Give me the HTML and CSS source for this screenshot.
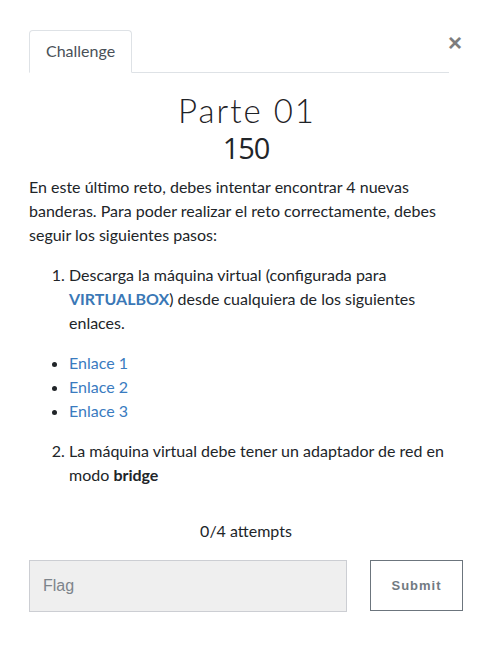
FILE: index.html
```html
<!DOCTYPE html>
<html lang="es">
<head>
<meta charset="utf-8">
<link rel="stylesheet" href="styles.css">
</head>
<body>
<div class="modal">
  <div class="tabs-row">
    <ul class="tabs">
      <li class="tab">Challenge</li>
    </ul>
    <button class="close" aria-label="Close">&times;</button>
  </div>
  <div class="content">
    <h2 class="title">Parte 01</h2>
    <div class="points">150</div>
    <p class="desc">En este último reto, debes intentar encontrar 4 nuevas banderas. Para poder realizar el reto correctamente, debes seguir los siguientes pasos:</p>
    <ol class="steps">
      <li><p>Descarga la máquina virtual (configurada para <a class="strong-link" href="#">VIRTUALBOX</a>) desde cualquiera de los siguientes enlaces.</p></li>
    </ol>
    <ul class="links">
      <li><a href="#">Enlace 1</a></li>
      <li><a href="#">Enlace 2</a></li>
      <li><a href="#">Enlace 3</a></li>
    </ul>
    <ol class="steps" start="2">
      <li><p>La máquina virtual debe tener un adaptador de red en modo <strong>bridge</strong></p></li>
    </ol>
    <p class="attempts">0/4 attempts</p>
    <div class="submit-row">
      <input class="flag" type="text" placeholder="Flag">
      <button class="submit">Submit</button>
    </div>
  </div>
</div>
</body>
</html>
```
FILE: styles.css
```css
* { box-sizing: border-box; }
html, body { margin: 0; padding: 0; background: #fff; }
body {
  font-family: Lato, "Open Sans", sans-serif;
  font-size: 16px;
  line-height: 24px;
  color: #212529;
}
.modal {
  padding: 30px 27px 0 29px;
  width: 490px;
}
.tabs-row {
  display: flex;
  align-items: flex-start;
}
.tabs {
  list-style: none;
  margin: 0;
  padding: 0;
  width: 420px;
  flex-shrink: 0;
  display: flex;
  border-bottom: 1px solid #dee2e6;
}
.tab {
  margin-bottom: -1px;
  padding: 8px 16px 9px 16px;
  border: 1px solid #dee2e6;
  border-bottom-color: #fff;
  border-radius: 4px 4px 0 0;
  color: #495057;
  font-size: 16px;
  line-height: 24px;
  background: #fff;
}
.close {
  margin: 1px 0 0 -1px;
  padding: 0;
  border: 0;
  background: none;
  font-family: "Liberation Sans", Arial, sans-serif;
  font-size: 24px;
  line-height: 24px;
  font-weight: 700;
  color: #7d7d7d;
}
.content {
  width: 434px;
}
.title {
  margin: 17px 0 0 0;
  text-align: center;
  font-family: Lato, "Open Sans", sans-serif;
  font-weight: 300;
  font-size: 33px;
  line-height: 40px;
  letter-spacing: 2px;
  text-indent: 2px;
  color: #1f2327;
}
.points {
  margin: 0 0 8px 0;
  text-align: center;
  font-family: "Open Sans", Lato, sans-serif;
  font-weight: 400;
  font-size: 29px;
  line-height: 36px;
  letter-spacing: -1px;
  color: #212529;
}
.desc { margin: 0 0 16px 0; padding-top: 1px; }
.steps {
  margin: 0;
  padding-left: 40px;
}
.steps p { margin: 0 0 16px 0; }
.links {
  margin: 0 0 16px 0;
  padding-left: 40px;
}
a {
  color: #3a7bbf;
  text-decoration: none;
}
.strong-link { font-weight: 700; color: #3a78b6; }
.attempts {
  margin: 32px 0 17px 0;
  text-align: center;
}
.submit-row {
  display: flex;
  width: 434px;
  gap: 23px;
}
.flag {
  width: 318px;
  height: 52px;
  background: #efefef;
  border: 1px solid #ccced3;
  padding: 0 13px;
  font-family: "Liberation Sans", Arial, sans-serif;
  font-size: 16px;
  color: #495057;
}
.flag::placeholder { color: #7d848b; }
.submit {
  width: 93px;
  height: 51px;
  background: #fff;
  border: 1px solid #6c757d;
  font-family: "Liberation Sans", Arial, sans-serif;
  font-weight: 700;
  font-size: 13px;
  letter-spacing: 1px;
  color: #727a82;
}
```
